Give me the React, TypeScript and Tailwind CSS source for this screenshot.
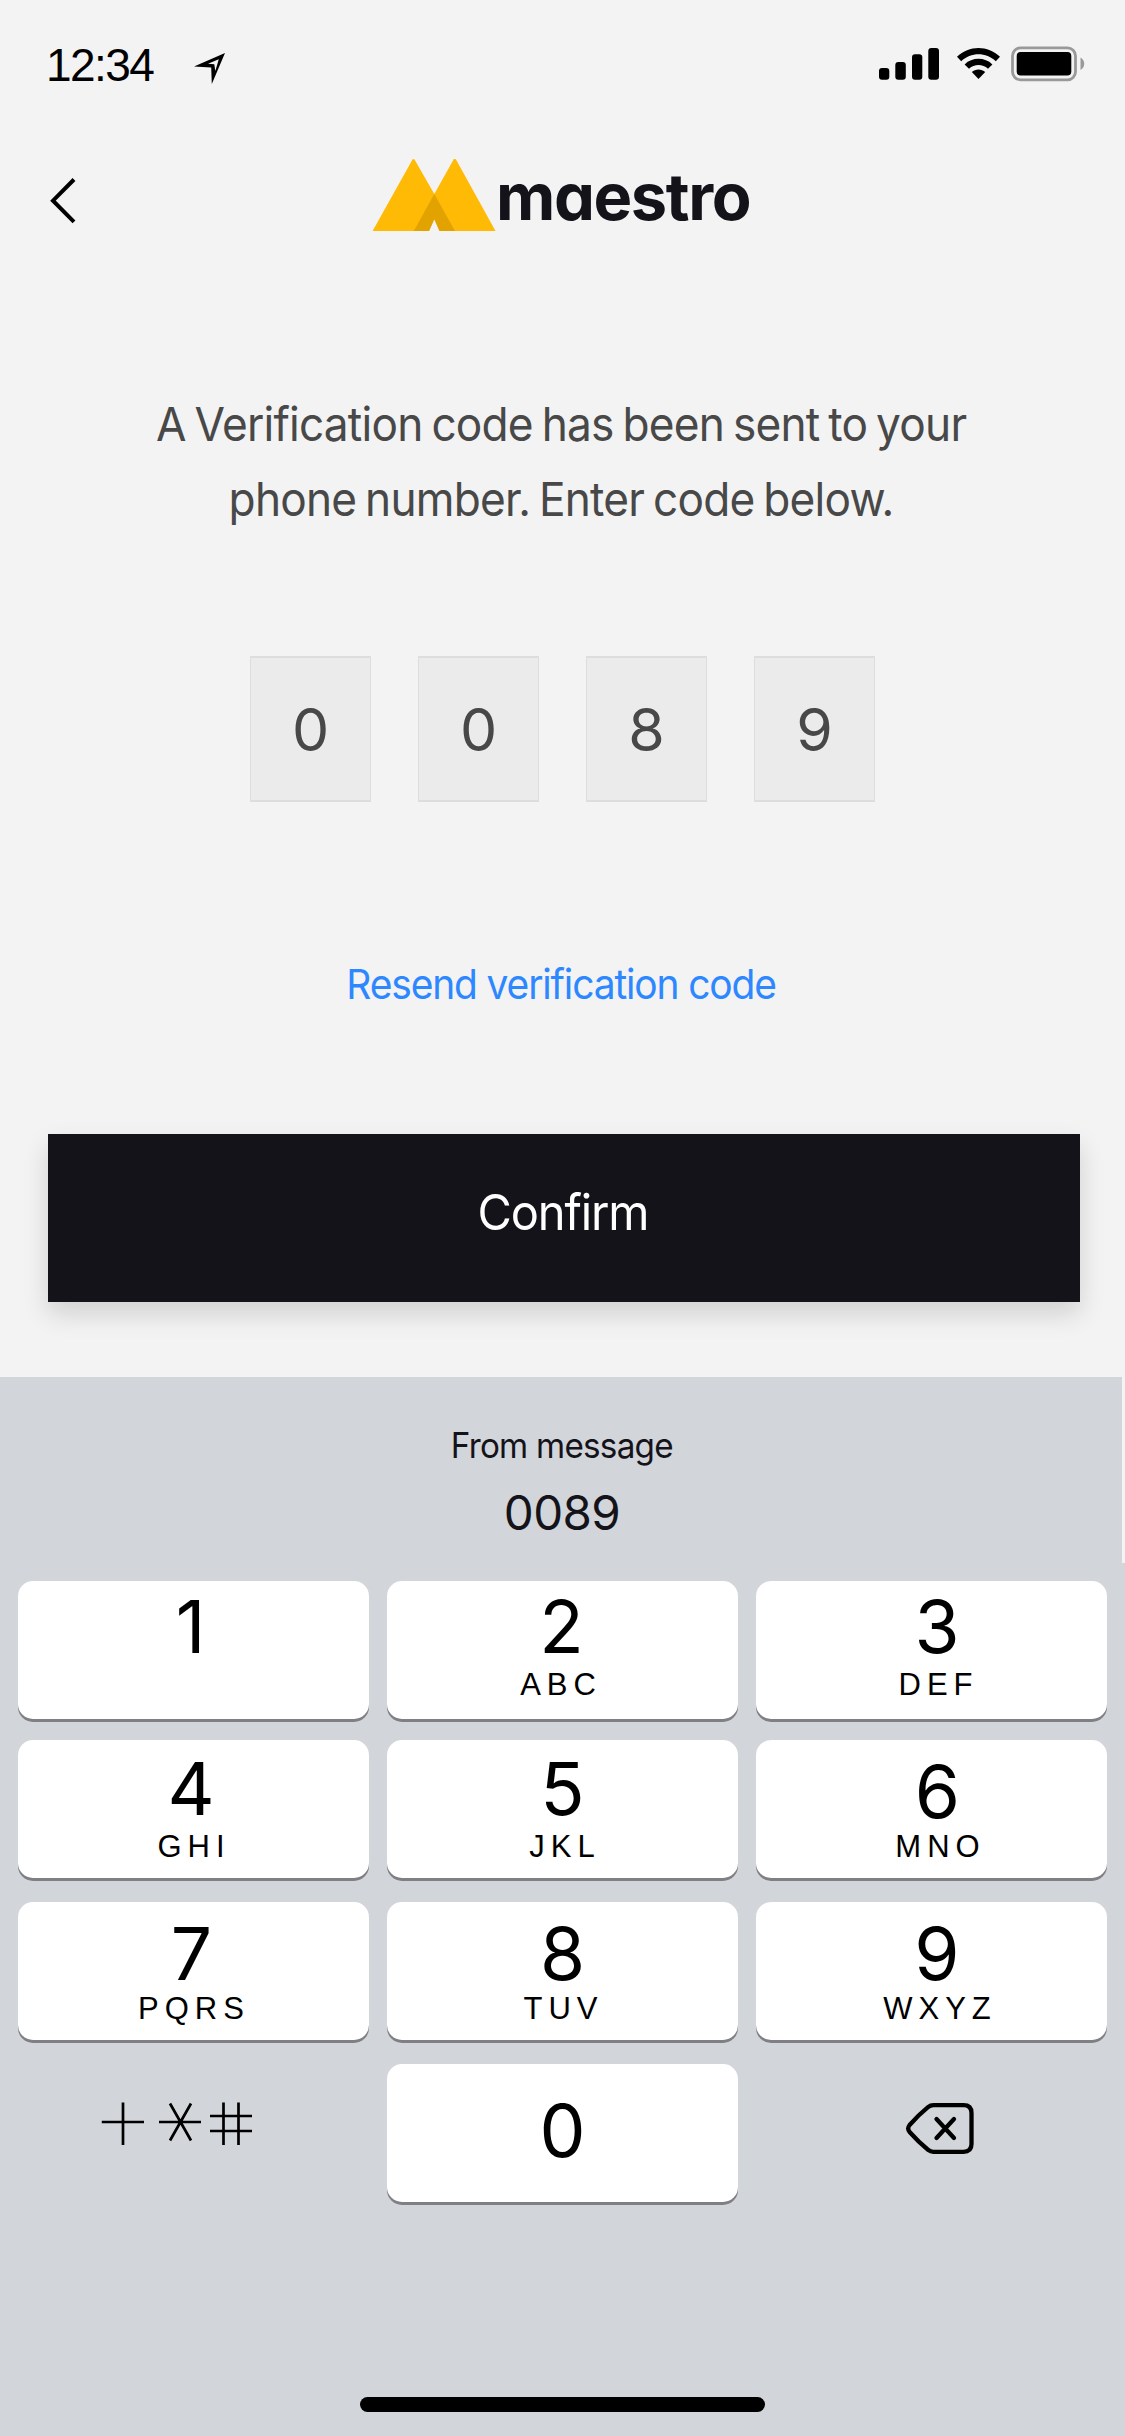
type Key = {
  digit: string;
  letters?: string;
  digitClass: string;
  lettersClass?: string;
};

const rows: { rowClass: string; keys: Key[] }[] = [
  {
    rowClass: "",
    keys: [
      { digit: "1", digitClass: "pt-[10px] pr-[6px]" },
      { digit: "2", letters: "ABC", digitClass: "pt-[10px] pr-[2px]", lettersClass: "mt-[7px] pr-[3px]" },
      { digit: "3", letters: "DEF", digitClass: "pt-[10px] pl-[11px]", lettersClass: "mt-[7px] pl-[14px]" },
    ],
  },
  {
    rowClass: "mt-[21px]",
    keys: [
      { digit: "4", letters: "GHI", digitClass: "pt-[13px] pr-[5px]", lettersClass: "mt-[7px] pl-[1px]" },
      { digit: "5", letters: "JKL", digitClass: "pt-[13px]", lettersClass: "mt-[7px] pl-[5px]" },
      { digit: "6", letters: "MNO", digitClass: "pt-[16px] pl-[12px]", lettersClass: "mt-[4px] pl-[18px]" },
    ],
  },
  {
    rowClass: "mt-[24px]",
    keys: [
      { digit: "7", letters: "PQRS", digitClass: "pt-[16px] pr-[4px]", lettersClass: "mt-[4px] pl-[1px]" },
      { digit: "8", letters: "TUV", digitClass: "pt-[16px]", lettersClass: "mt-[4px] pl-[2px]" },
      { digit: "9", letters: "WXYZ", digitClass: "pt-[16px] pl-[11px]", lettersClass: "mt-[4px] pl-[17px]" },
    ],
  },
];

function KeyButton({ digit, letters, digitClass, lettersClass }: Key) {
  return (
    <button className="flex h-[138px] w-[351px] flex-col items-center rounded-[15px] bg-white text-black shadow-[0_3px_0_#808084]">
      <span className={`text-[73px] leading-[72px] ${digitClass}`}>{digit}</span>
      {letters && (
        <span
          className={`font-['Liberation_Sans',sans-serif] text-[31px] leading-[30px] tracking-[6px] ${lettersClass}`}
        >
          {letters}
        </span>
      )}
    </button>
  );
}

function StatusBar() {
  return (
    <div className="flex h-[130px] items-start">
      <span className="ml-[46px] mt-[35px] w-[148px] font-['Liberation_Sans',sans-serif] text-[46px] leading-[60px] tracking-[-1.6px] text-black">
        12:34
      </span>
      <svg className="mt-[52px]" width="32" height="34" viewBox="0 0 32 34">
        <path
          fillRule="evenodd"
          d="M31 1 0 14.4 17.2 15.4 17.8 32ZM24.8 7.3 14 11.8 20.3 12.2 21.3 19Z"
        />
      </svg>
      <svg className="ml-[652px] mt-[47px]" width="62" height="34" viewBox="0 0 62 34">
        <rect x="1" y="21" width="10.3" height="11.8" rx="3" />
        <rect x="17.3" y="15" width="10.5" height="17.8" rx="3" />
        <rect x="34" y="7.2" width="10.3" height="25.6" rx="3" />
        <rect x="50.3" y="1" width="10.7" height="31.8" rx="3" />
      </svg>
      <svg className="ml-[16px] mt-[47px]" width="45" height="34" viewBox="0 0 45 34">
        <path d="M1 9.8C13-1.8 32-1.8 44 9.8L39.8 14.2C30 5 15 5 5.2 14.2Z" />
        <path d="M8.6 17.4C16.2 10 28.8 10 36.4 17.4L32 21.8C26.6 16.8 18.4 16.8 13 21.8Z" />
        <path d="M15.8 25C19.4 21.6 25.6 21.6 29.2 25L22.5 32Z" />
      </svg>
      <svg className="ml-[10px] mt-[46px]" width="75" height="36" viewBox="0 0 75 36">
        <rect x="1.5" y="1.8" width="63" height="32" rx="8" fill="none" stroke="#999" strokeWidth="2.8" />
        <rect x="5.7" y="6" width="54.6" height="23.5" rx="4" />
        <path d="M69.5 11.5C74.5 14 74.5 21.5 69.5 24Z" fill="#999" />
      </svg>
    </div>
  );
}

function Header() {
  return (
    <header className="flex h-[130px] items-start">
      <button className="ml-[49px] mt-[47px]" aria-label="Back">
        <svg width="27" height="48" viewBox="0 0 27 48">
          <path d="M25 2.5 4 23.7 25 44.9" fill="none" stroke="#000" strokeWidth="4" />
        </svg>
      </button>
      <svg className="ml-[296px] mt-[29px]" width="124" height="72" viewBox="0 0 124 72">
        <path
          d="M.6 72 40.5.6Q41.5-.6 42.500.6L62.3 35 82-.2Q83-.8 84 .6L123.5 72H67.5L62.3 60 57 72Z"
          fill="#ffba05"
        />
        <path d="M62.3 35 83 72H67.5L62.3 60.3 57 72H41.8Z" fill="#e2a200" />
      </svg>
      <span className="mt-[31px] text-[65px] font-bold leading-[72px] tracking-[-1.4px] text-[#15131a] [font-feature-settings:'cv11']">
        maestro
      </span>
    </header>
  );
}

export default function App() {
  return (
    <main className="h-[2436px] w-[1125px] overflow-hidden bg-[#f3f3f3] font-['Inter',sans-serif]">
      <StatusBar />
      <Header />

      <p className="mt-[127px] scale-x-95 whitespace-nowrap pr-[3px] text-center text-[46.5px] leading-[75px] tracking-[-0.8px] text-[#484848] [word-spacing:-3px]">
        A Verification code has been sent to your
        <br />
        phone number. Enter code below.
      </p>

      <div className="mt-[119px] flex justify-center gap-[47px]">
        {["0", "0", "8", "9"].map((digit, i) => (
          <div
            key={i}
            className="flex h-[146px] w-[121px] items-center justify-center border-x border-y-2 border-[#ddd] bg-[#ebebeb] text-[59px] leading-none text-[#484848]"
          >
            {digit}
          </div>
        ))}
      </div>

      <div className="mt-[152px] flex justify-center pr-[2px]">
        <a className="scale-x-95 text-[41px] leading-[60px] tracking-[-1.2px] text-[#2d88ff]">
          Resend verification code
        </a>
      </div>

      <button className="ml-[48px] mt-[120px] flex h-[168px] w-[1032px] items-center justify-center bg-[#15131a] pb-[12px] pr-[3px] text-white shadow-[0_12px_24px_rgba(0,0,0,0.14)]">
        <span className="scale-x-95 text-[49.5px] leading-[60px] tracking-[-1.2px]">Confirm</span>
      </button>

      <section className="mt-[75px]">
        <div className="flex h-[186px] w-[1122px] flex-col items-center bg-[#d2d5da] pl-[2px] pt-[48px] text-[#15131a]">
          <span className="scale-x-95 text-[35px] leading-[40px] tracking-[-0.8px]">From message</span>
          <span className="mt-[18px] text-[47.5px] leading-[60px] tracking-[-0.6px]">0089</span>
        </div>

        <div className="h-[873px] bg-[#d2d5da] px-[18px] pt-[18px]">
          {rows.map(({ rowClass, keys }, i) => (
            <div key={i} className={`flex gap-[18px] ${rowClass}`}>
              {keys.map((key) => (
                <KeyButton key={key.digit} {...key} />
              ))}
            </div>
          ))}
          <div className="mt-[24px] flex gap-[18px]">
            <button className="flex h-[138px] w-[351px] items-start pl-[83px] pt-[38px]" aria-label="Symbols">
              <svg width="152" height="44" viewBox="0 0 152 44" fill="none" stroke="#000" strokeWidth="2.7">
                <path d="M.8 20H43M22 .5V43" />
                <path d="M58 20H100M69 1.5 90 38.5M90 1.5 69 38.5" />
                <path d="M109 14H151M109 29H151M122.5.5V43M137.5.5V43" />
              </svg>
            </button>
            <KeyButton digit="0" digitClass="pt-[31px]" />
            <button className="flex h-[138px] w-[351px] items-start pl-[149px] pt-[38px]" aria-label="Delete">
              <svg
                width="70"
                height="54"
                viewBox="0 0 70 54"
                fill="none"
                stroke="#000"
                strokeWidth="4.3"
                strokeLinecap="round"
                strokeLinejoin="round"
              >
                <path d="M28.5 3.2H58.5Q66.5 3.200 66.5 11V42Q66.5 49.8 58.5 49.8H28.5Q25.5 49.8 23 47.8 13.5 40 4.6 30 1.8 26.5 4.6 23 13.5 13 23 5.2 25.5 3.2 28.5 3.2Z" />
                <path d="M31.5 17 49 36M49 17 31.5 36" />
              </svg>
            </button>
          </div>
          <div className="mx-auto mt-[195px] h-[15px] w-[405px] rounded-[7.5px] bg-black" />
        </div>
      </section>
    </main>
  );
}
